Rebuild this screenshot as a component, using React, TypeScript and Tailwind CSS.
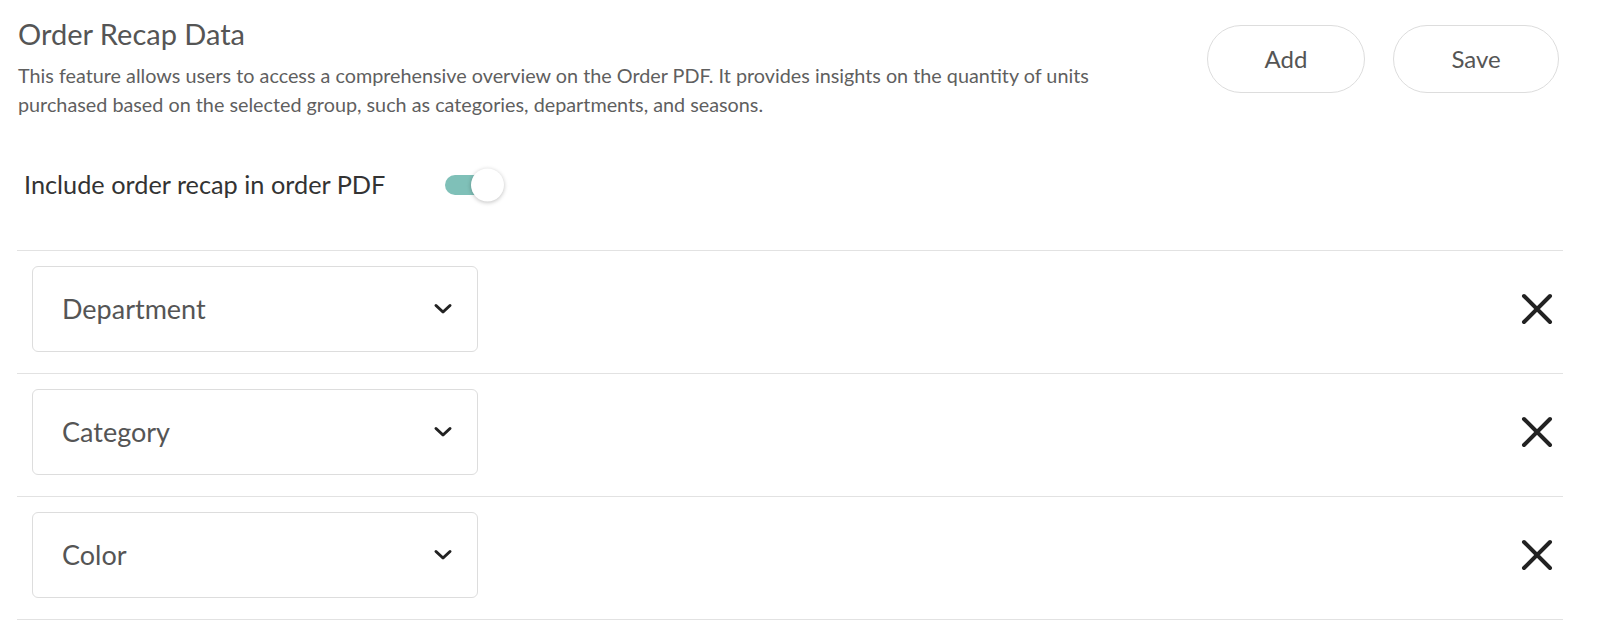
import { useState } from "react";

const groups = ["Department", "Category", "Color"];

function Chevron() {
  return (
    <svg width="20" height="14" viewBox="0 0 20 14" fill="none" className="shrink-0">
      <path d="M3 3.5 L10 10 L17 3.5" stroke="#222" strokeWidth="3" strokeLinecap="round" strokeLinejoin="round" />
    </svg>
  );
}

function CloseIcon() {
  return (
    <svg width="32" height="32" viewBox="0 0 32 32" fill="none">
      <path d="M3 3 L29 29 M29 3 L3 29" stroke="#222" strokeWidth="4" strokeLinecap="round" />
    </svg>
  );
}

export default function App() {
  const [enabled, setEnabled] = useState(true);

  return (
    <main className="min-h-screen bg-white pl-[17px] pr-[37px] pt-[16px] font-['Lato',sans-serif]">
      <header className="flex items-start justify-between">
        <div className="pl-px">
          <h1 className="text-[29px] leading-[36px] text-[#555]">Order Recap Data</h1>
          <p className="mt-[9px] max-w-[1130px] text-[19.8px] leading-[28.5px] text-[#5f5f5f]">
            This feature allows users to access a comprehensive overview on the Order PDF. It provides insights on the quantity of units purchased based on the selected group, such as categories, departments, and seasons.
          </p>
        </div>
        <div className="mr-[4px] mt-[9px] flex shrink-0 gap-[28px]">
          <button className="h-[68px] w-[158px] rounded-full border border-[#ddd] text-[24px] text-[#555]">Add</button>
          <button className="h-[68px] w-[166px] rounded-full border border-[#ddd] text-[24px] text-[#555]">Save</button>
        </div>
      </header>

      <div className="mt-[47px] flex h-[40px] items-center pl-[7px]">
        <span className="w-[421px] text-[25.3px] text-[#333]">Include order recap in order PDF</span>
        <button onClick={() => setEnabled(!enabled)} className="relative h-[20px] w-[48px]">
          <span className={"absolute inset-0 rounded-full " + (enabled ? "bg-[#7fc0b8]" : "bg-[#ccc]")} />
          <span
            className={
              "absolute top-1/2 h-[33px] w-[33px] -translate-y-1/2 rounded-full bg-white shadow-[0_1px_4px_rgba(0,0,0,0.25)] " +
              (enabled ? "left-[26px]" : "left-[-6px]")
            }
          />
        </button>
      </div>

      <div className="mt-[45px]">
        {groups.map((g) => (
          <div key={g} className="flex items-center justify-between border-t border-[#e2e2e2] pb-[21px] pt-[15px]">
            <div className="ml-[15px] flex h-[86px] w-[446px] items-center justify-between rounded-[6px] border border-[#ddd] pl-[29px] pr-[24px]">
              <span className="text-[27px] text-[#555]">{g}</span>
              <Chevron />
            </div>
            <button className="mr-[10px]">
              <CloseIcon />
            </button>
          </div>
        ))}
        <div className="border-t border-[#e2e2e2]" />
      </div>
    </main>
  );
}
